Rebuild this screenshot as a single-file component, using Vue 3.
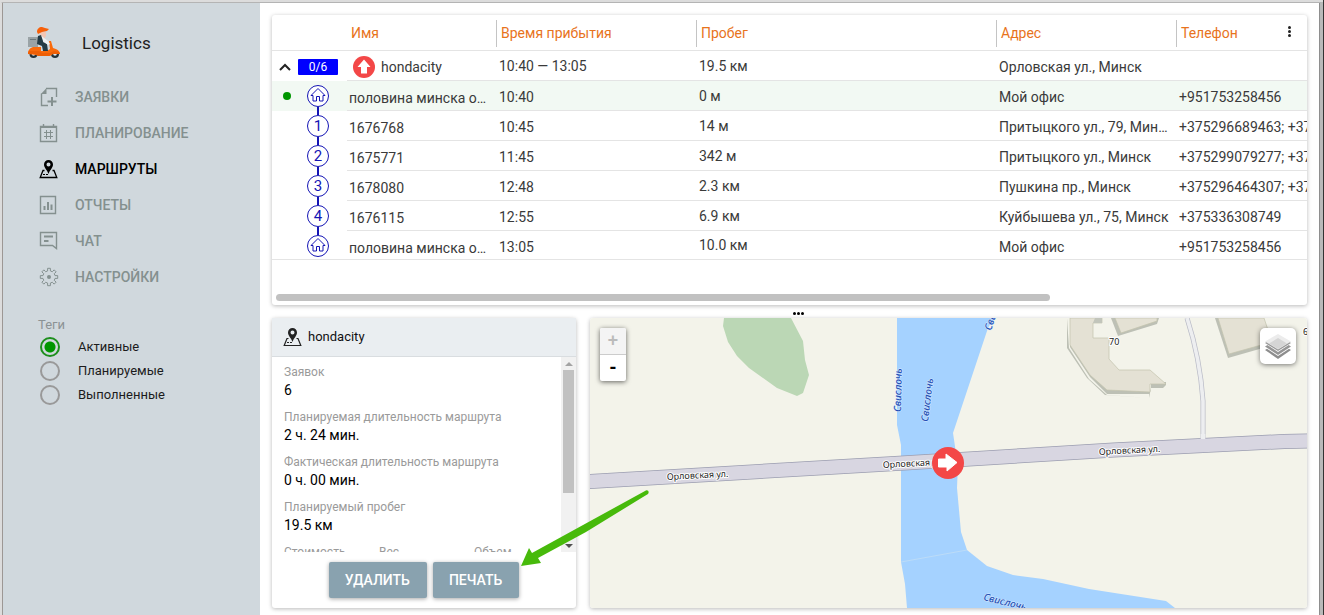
<script setup>
import { ref } from 'vue'

const nav = [
  { id: 'orders', label: 'ЗАЯВКИ' },
  { id: 'planning', label: 'ПЛАНИРОВАНИЕ' },
  { id: 'routes', label: 'МАРШРУТЫ' },
  { id: 'reports', label: 'ОТЧЕТЫ' },
  { id: 'chat', label: 'ЧАТ' },
  { id: 'settings', label: 'НАСТРОЙКИ' },
]
const active = ref('routes')
const tags = ['Активные', 'Планируемые', 'Выполненные']
const tag = ref('Активные')

// Outline of an eight-toothed gear centred on (10, 10)
const gear = 'M' + Array.from({ length: 8 }, (_, i) =>
  [[-9, 8.8], [9, 8.8], [13, 6.2], [32, 6.2]]
    .map(([a, r]) => {
      const t = ((i * 45 + a) * Math.PI) / 180
      return `${(10 + r * Math.sin(t)).toFixed(2)} ${(10 - r * Math.cos(t)).toFixed(2)}`
    })
    .join('L')
).join('L') + 'z'

const stops = [
  { mark: 'home', name: 'половина минска офис', time: '10:40', run: '0 м', address: 'Мой офис', phone: '+951753258456', current: true },
  { mark: '1', name: '1676768', time: '10:45', run: '14 м', address: 'Притыцкого ул., 79, Минск', phone: '+375296689463; +375296689464' },
  { mark: '2', name: '1675771', time: '11:45', run: '342 м', address: 'Притыцкого ул., Минск', phone: '+375299079277; +375299079278' },
  { mark: '3', name: '1678080', time: '12:48', run: '2.3 км', address: 'Пушкина пр., Минск', phone: '+375296464307; +375296464308' },
  { mark: '4', name: '1676115', time: '12:55', run: '6.9 км', address: 'Куйбышева ул., 75, Минск', phone: '+375336308749' },
  { mark: 'home', name: 'половина минска офис', time: '13:05', run: '10.0 км', address: 'Мой офис', phone: '+951753258456' },
]
const facts = [
  { label: 'Заявок', value: '6' },
  { label: 'Планируемая длительность маршрута', value: '2 ч. 24 мин.' },
  { label: 'Фактическая длительность маршрута', value: '0 ч. 00 мин.' },
  { label: 'Планируемый пробег', value: '19.5 км' },
]
</script>

<template>
  <div class="window">
    <aside class="sidebar">
      <div class="brand">
        <svg width="34" height="34" viewBox="27 26 34 34" aria-hidden="true">
          <rect x="28" y="37" width="10" height="10" fill="#9aa3a6" />
          <rect x="30" y="39" width="6" height="1" fill="#6b787d" />
          <circle cx="33.500" cy="54" r="4" fill="#263238" /><circle cx="33.500" cy="54" r="1.800" fill="#e4e9eb" />
          <circle cx="55" cy="54" r="4" fill="#263238" /><circle cx="55" cy="54" r="1.800" fill="#e4e9eb" />
          <path d="M28 54c0-4 2-6 5-7h8v4h6l3-2-1-8h2l2 7c4 1 7 3 7 6h-7l-3 2H38l-2-1z" fill="#f96a0b" />
          <path d="M28 54c0-1 0-2 1-3h10l3 2h8l4-2 5 1 1 2h-8l-3 2H38l-2-2z" fill="#ee5f06" />
          <path d="M40 32h6v4l-2 3h-3z" fill="#f3c6b4" />
          <path d="M38 36l3-1 2 3v4l4 2 1 7h-5l-1-5-5-2z" fill="#243b45" />
          <path d="M41 35l3 3 4 3 2 3-2 1-5-4z" fill="#eef1f2" />
          <path d="M37 32c0-3 2-5 5-5l3 1 4 1-2 2-5 1-4 2z" fill="#f7600a" />
        </svg>
        <h1>Logistics</h1>
      </div>
      <nav>
        <a v-for="n in nav" :key="n.id" href="#" :class="{ on: active === n.id }" @click.prevent="active = n.id">
          <svg width="20" height="20" viewBox="0 0 20 20" fill="none" stroke="currentColor" aria-hidden="true">
            <g v-if="n.id === 'orders'">
              <path d="M7 1.500h10.500V10M2.500 6.500v12H9" stroke-width="1.400" />
              <path d="M2 7 7.500 1v6z" fill="currentColor" stroke="none" />
              <path d="M13 10v9M8.500 14.500h9" stroke-width="2" />
            </g>
            <g v-else-if="n.id === 'planning'">
              <path d="M1.500 3.500h16v15h-16z" stroke-width="1.400" /><path d="M4.500 1v3M14.500 1v3" stroke-width="1.400" /><path d="M1 4h17" stroke-width="2" />
              <path d="M7.500 7v9M11.500 7v9M5 9.500h9M5 13.500h9" />
            </g>
            <g v-else-if="n.id === 'routes'">
              <path d="M5.500 11.500H4L1.200 18.500h16.600l-2.800-7h-1.500" stroke-width="1.300" />
              <path d="M4 15.500h5" stroke-dasharray="2 1" />
              <path d="M9.500 1A4.500 4.500 0 0 0 5 5.500C5 9 8 10.500 9.500 15 11 10.500 14 9 14 5.500A4.500 4.500 0 0 0 9.500 1zm0 2.500a2 2 0 1 1 0 4 2 2 0 0 1 0-4z" fill="currentColor" stroke="none" />
            </g>
            <g v-else-if="n.id === 'reports'">
              <path d="M1.500 1.500h15v17h-15z" stroke-width="1.400" /><path d="M5.500 11v4M9 7v8M12.500 9.500V15" stroke-width="2" />
            </g>
            <g v-else-if="n.id === 'chat'">
              <path d="M1.500 1.500h16v16l-4-3h-12z" stroke-width="1.400" /><path d="M5 5.500h9M5 10h4.500" stroke-width="2" />
            </g>
            <g v-else>
              <path :d="gear" stroke-linejoin="round" />
              <circle cx="10" cy="10" r="2" fill="currentColor" stroke="none" />
            </g>
          </svg>
          <span>{{ n.label }}</span>
        </a>
      </nav>
      <fieldset>
        <legend>Теги</legend>
        <label v-for="t in tags" :key="t"><input v-model="tag" type="radio" name="tag" :value="t" />{{ t }}</label>
      </fieldset>
    </aside>

    <main>
      <section class="card routes">
        <div class="viewport">
          <table>
            <colgroup><col class="c0" /><col class="c1" /><col class="c2" /><col class="c3" /><col class="c4" /><col class="c5" /></colgroup>
            <thead>
              <tr>
                <th></th><th>Имя</th><th><span>Время прибытия</span></th><th><span>Пробег</span></th><th><span>Адрес</span></th><th><span>Телефон</span></th>
              </tr>
            </thead>
            <tbody>
              <tr>
                <td>
                  <div class="lead">
                    <button class="caret" aria-label="Свернуть"><svg width="12" height="8" viewBox="0 0 12 8" fill="none" stroke="#222" stroke-width="2"><path d="M1 7l5-5 5 5" /></svg></button>
                    <span class="count">0/6</span>
                  </div>
                </td>
                <td>
                  <div class="vehicle">
                    <svg width="22" height="22" viewBox="0 0 22 22"><circle cx="11" cy="11" r="11" fill="#f34747" /><path d="M11 3.500 17.500 11H14v6.500H8V11H4.500z" fill="#fff" /></svg>hondacity
                  </div>
                </td>
                <td>10:40 — 13:05</td><td>19.5 км</td><td class="low">Орловская ул., Минск</td><td></td>
              </tr>
              <tr v-for="(s, i) in stops" :key="i" :class="{ current: s.current }">
                <td>
                  <div class="chain">
                    <span class="state"><i v-if="s.current"></i></span>
                    <svg width="24" height="28" viewBox="0 0 24 28" stroke="#1414b4" fill="none">
                      <path v-if="i" d="M12 -4V4" stroke-width="2" />
                      <path v-if="i < stops.length - 1" d="M12 26V31" stroke-width="2" />
                      <circle cx="12" cy="15" r="10.500" fill="#fff" />
                      <path v-if="s.mark === 'home'" d="M5 14.500 12 7.500l7 7h-2V20h-3.500v-4.500h-3V20H7v-5.500z" />
                      <text v-else x="12" y="20" text-anchor="middle">{{ s.mark }}</text>
                    </svg>
                  </div>
                </td>
                <td class="name">{{ s.name }}</td><td class="low">{{ s.time }}</td><td>{{ s.run }}</td><td class="low">{{ s.address }}</td><td class="low">{{ s.phone }}</td>
              </tr>
            </tbody>
          </table>
        </div>
        <div class="hbar"><div></div></div>
        <button class="more" aria-label="Меню"><i></i><i></i><i></i></button>
      </section>

      <div class="splitter"><i></i><i></i><i></i></div>

      <section class="lower">
        <article class="card info">
          <header>
            <svg width="20" height="20" viewBox="0 0 20 20" fill="none" stroke="#222" aria-hidden="true">
              <path d="M5.500 11.500H4L1.200 18.500h16.600l-2.800-7h-1.500" stroke-width="1.200" /><path d="M4 15.500h5" stroke-dasharray="2 1" />
              <path d="M9.500 1A4.500 4.500 0 0 0 5 5.500C5 9 8 10.500 9.500 15 11 10.500 14 9 14 5.500A4.500 4.500 0 0 0 9.500 1zm0 2.500a2 2 0 1 1 0 4 2 2 0 0 1 0-4z" fill="#222" stroke="none" />
            </svg>
            <h2>hondacity</h2>
          </header>
          <div class="body">
            <dl>
              <div v-for="f in facts" :key="f.label"><dt>{{ f.label }}</dt><dd>{{ f.value }}</dd></div>
              <div class="triple"><dt>Стоимость</dt><dt>Вес</dt><dt>Объем</dt></div>
            </dl>
            <div class="vbar"><b class="up"></b><div></div><b class="down"></b></div>
          </div>
          <footer><button>УДАЛИТЬ</button><button>ПЕЧАТЬ</button></footer>
        </article>

        <div class="card map">
          <svg class="tiles" viewBox="590 318 717 290" preserveAspectRatio="xMinYMin slice">
            <rect x="590" y="318" width="1400" height="700" fill="#f3f3ea" />
            <path d="M724 318h67l12 23 2 19 4 15-6 18-6 3-20-8-28-20-12-12-9-14-5-16z" fill="#bbd7b5" />
            <path d="M897 318h97l-6 10-35 105 3 20 2 10-1 25 4 44 6 18 20 16 26 9 30 4 46 10 77 12 9 7H907l-2-24-4-22V445l-4-20z" fill="#a5d2ff" />
            <path d="M901 562l66-12" stroke="#bcdcf8" />
            <path d="M1067 318h3v29l20 30 17 17h42v4l-44-3-18-17-20-30zM1067 318l2 30 20 31 18 16 42 3 2-10h12l3-3v-3h-15v8h-43l-17-16-19-27v-29z" fill="#bdc0b5" />
            <path d="M1070 318h32v5h-9v15h16v21l10 11h31l16 14h-16v8l-43-2-17-15-20-30z" fill="#e4e1d4" stroke="#c3c3ae" stroke-width=".7" />
            <path d="M1093 323l9 0v-5h-7z" fill="#c2c5bb" />
            <path d="M1111 318l7 18 39-12 2-6z" fill="#bdc0b5" /><path d="M1115 318l6 15 36-12v-3z" fill="#e4e1d4" stroke="#c3c3ae" stroke-width=".7" />
            <path d="M1215 318l13 40 35-10-3-30z" fill="#bdc0b5" /><path d="M1218 318l11 36 43-12-8-24z" fill="#e4e1d4" stroke="#c3c3ae" stroke-width=".7" />
            <path d="M1187 318q13 40 16 83v42" fill="none" stroke="#b8bac6" stroke-width="5" /><path d="M1187 318q13 40 16 83v42" fill="none" stroke="#edeef0" stroke-width="3.600" />
            <path d="M589 481.500 904 463l210-13 170-8.500 30-.5h700" fill="none" stroke="#9b9db0" stroke-width="15" />
            <path d="M589 481.500 904 463l210-13 170-8.500 30-.5h700" fill="none" stroke="#d8d6e1" stroke-width="13.500" />
            <path d="M1200.700 434v5h4.600v-5z" fill="#edeef0" />
            <g class="street">
              <text transform="translate(667 480) rotate(-3)">Орловская ул.</text>
              <text transform="translate(883 468) rotate(-3)">Орловская ул.</text>
              <text transform="translate(1099 455) rotate(-3)">Орловская ул.</text>
              <text x="1109" y="345">70</text><text x="1303" y="335">68</text>
            </g>
            <g class="river">
              <text transform="translate(901 412) rotate(-89)">Свислочь</text>
              <text transform="translate(928 422) rotate(-83)">Свислочь</text>
              <text transform="translate(991 331) rotate(-72)">Свислочь</text>
              <text transform="translate(983 600) rotate(14)">Свислочь</text>
            </g>
            <circle cx="948" cy="463" r="16" fill="#f34747" /><path d="M938.500 459h7.500v-5l11 8.500-10 8.500V467h-8.500z" fill="#fff" stroke="#fff" stroke-linejoin="round" />
          </svg>
          <div class="zoom"><button disabled aria-label="Приблизить">+</button><button aria-label="Отдалить">-</button></div>
          <button class="layers" aria-label="Слои">
            <svg width="28" height="28" viewBox="0 0 28 28">
              <path d="M1 18l13-8 13 8-13 9z" fill="#8d8d8d" /><path d="M1 15.500l13-8 13 8-13 8.500z" fill="#fff" />
              <path d="M1 14.500l13-8 13 8-13 8.500z" fill="#959595" /><path d="M1 11.500l13-8 13 8-13 8.500z" fill="#fff" />
              <path d="M1 11l13-8 13 8-13 8z" fill="#999" /><path d="M1 9.500 14 2l13 7.500-13 8z" fill="#ececec" /><path d="M5 11.500 14 6l9 5.500-9 5.500z" fill="#d5d5d5" />
            </svg>
          </button>
        </div>

        <svg class="pointer" width="132" height="80" viewBox="520 488 132 80" aria-hidden="true">
          <path d="M645 491c2-2 5 0 3 3l-5 3-57 35-48 26 3 5-20 3 8-18 3 5z" fill="#47ba0b" />
        </svg>
      </section>
    </main>
  </div>
</template>

<style>
body { background: #fff; }
</style>

<style scoped>
* { box-sizing: border-box; }
.window { height: 100vh; display: flex; font: 14px/20px Roboto, sans-serif; color: #3a3a3a; border-top: 3px solid #b4b4b4; border-left: 2px solid #dcdcdc; border-right: 4px solid #b9b9b9; box-shadow: inset -1px 0 #8e8e8e; position: relative; overflow: hidden; padding-right: 1px; }
button { font-family: inherit; border: 0; padding: 0; background: none; }
.window::before { content: ''; position: fixed; inset: 0 0 auto; height: 2px; background: #dcdcdc; }
.window::after { content: ''; position: fixed; inset: 0 0 0 auto; width: 1px; background: #333; }

.sidebar { width: 258px; flex: none; background: #d0d8dd; border-left: 1px solid #9c9794; padding-top: 23px; }
.brand { display: flex; align-items: center; gap: 21px; padding-left: 24px; height: 34px; }
h1 { margin: 0; font-size: 17px; font-weight: 400; color: #212121; }
nav { padding-top: 19px; }
nav a { display: flex; align-items: center; gap: 16px; height: 36px; padding-left: 36px; color: #84908f; font-size: 14px; font-weight: 500; text-decoration: none; }
nav a.on { color: #000; }
fieldset { border: 0; margin: 21px 0 0; padding: 0 0 0 35px; font-size: 13px; }
legend { padding: 0 0 1px; line-height: 18px; color: #8b9294; }
fieldset label { display: flex; align-items: center; gap: 18px; height: 24px; padding-left: 2px; color: #1c1c1c; }
input { appearance: none; width: 20px; height: 20px; margin: 0; border: 2px solid #999; border-radius: 50%; }
input:checked { border-color: #1d8f1d; background: radial-gradient(#009600 0 5px, transparent 6px); }

main { flex: 1; min-width: 0; display: flex; flex-direction: column; padding: 12px 12px 7px; }
.card { background: #fff; border-radius: 3px; box-shadow: 0 1px 4px rgba(0, 0, 0, .28); position: relative; }
.routes { flex: none; height: 290px; }
.viewport { overflow: hidden; height: 278px; border-radius: 3px 3px 0 0; }
table { width: 1363px; table-layout: fixed; border-collapse: separate; border-spacing: 0; }
.c0 { width: 75px; } .c1 { width: 149px; } .c2 { width: 200px; } .c3 { width: 300px; } .c4 { width: 180px; }
th { height: 36px; padding: 1px 0 0 4px; text-align: left; font-weight: 400; color: #e8731c; border-bottom: 1px solid #e4e4e4; }
th span { display: block; margin-left: -4px; padding-left: 4px; border-left: 1px solid #c4c4c4; line-height: 27px; }
td { height: 30px; padding: 1px 5px 0 3px; vertical-align: top; line-height: 28px; border-bottom: 1px solid #e4e4e4; white-space: nowrap; overflow: hidden; text-overflow: ellipsis; }
td:first-child { padding: 0; border-bottom-color: transparent; overflow: visible; }
td.name { padding: 5px 8px 0 2px; line-height: 24px; }
td.low { padding-top: 3px; line-height: 26px; }
tr:last-child td { height: 29px; border-bottom-color: #e4e4e4; line-height: 27px; }
tr:last-child td.name { padding-top: 6px; line-height: 22px; }
tr:last-child td.low { padding-top: 4px; line-height: 24px; }
.current { background: #f2f9f3; }
.lead { display: flex; align-items: center; gap: 7px; padding: 8px 0 0 7px; }
.caret { display: flex; }
.count { width: 40px; height: 16px; background: #00f; color: #fff; text-align: center; font-size: 12px; line-height: 16px; border-radius: 1px; }
.vehicle { display: flex; align-items: center; gap: 6px; padding: 1px 0 0 3px; height: 28px; }
.chain { display: flex; align-items: center; }
.chain svg { overflow: visible; display: block; margin-left: 4px; }
.chain text { font-size: 15px; fill: #1414b4; stroke: none; }
.state { width: 30px; display: flex; justify-content: center; padding-top: 2px; }
.state i { width: 8px; height: 8px; border-radius: 50%; background: #009600; }
.hbar { padding: 1px 4px; }
.hbar div { width: 75.4%; height: 7px; border-radius: 4px; background: #c1c1c1; }
.more { position: absolute; top: 10px; right: 15px; display: grid; gap: 1px; padding: 1px; }
.more i { width: 3px; height: 3px; border-radius: 50%; background: #222; }
.splitter { flex: none; height: 13px; display: flex; justify-content: center; align-items: flex-end; gap: 1px; padding: 0 0 3px 17px; }
.splitter i { width: 3px; height: 3px; border-radius: 50%; background: #000; }

.lower { flex: 1; min-height: 0; display: flex; gap: 14px; position: relative; }
.info { width: 304px; flex: none; display: flex; flex-direction: column; }
.info header { flex: none; height: 39px; display: flex; align-items: center; gap: 5px; padding-left: 11px; background: #eaeef1; border-bottom: 1px solid #d9dde0; }
h2 { margin: 0; font-size: 13px; font-weight: 400; color: #111; }
.body { flex: 1; min-height: 0; display: flex; overflow: hidden; }
dl { flex: 1; margin: 0; padding: 6px 0 0 12px; }
dl div { margin-bottom: 8px; }
dt { font-size: 12px; line-height: 18px; color: #9a9a9a; }
dd { margin: 0; color: #000; line-height: 19px; }
.triple { display: grid; grid-template-columns: 95px 95px 1fr; }
.vbar { width: 15px; background: #f1f1f1; display: flex; flex-direction: column; align-items: center; }
.vbar div { flex: none; width: 11px; height: 63%; background: #c1c1c1; }
.vbar b { border: 4px solid transparent; }
.vbar .up { border-bottom-color: #a3a3a3; margin: 1px 0 4px; }
.vbar .down { border-top-color: #505050; margin-top: auto; }
.info footer { flex: none; height: 56px; display: flex; justify-content: center; align-items: center; gap: 6px; }
.info footer button { height: 36px; padding: 0 17px 0 16px; background: #89a2af; color: #fff; font-size: 14px; font-weight: 500; border-radius: 2px; box-shadow: 0 1px 4px rgba(0, 0, 0, .35); }

.map { flex: 1; min-width: 0; overflow: hidden; }
.tiles { width: 100%; height: 100%; display: block; }
.street text, .river text { font-family: "Noto Sans", "Open Sans", sans-serif; paint-order: stroke; stroke-linejoin: round; }
.street text { font-size: 9px; fill: #222; stroke: #fff; stroke-width: 2px; }
.river text { font-size: 10px; font-weight: 500; font-style: italic; fill: #2450b4; stroke: #d9eaff; stroke-width: 1px; }
.zoom { position: absolute; left: 10px; top: 10px; width: 26px; box-shadow: 0 1px 5px rgba(0, 0, 0, .6); border-radius: 2px; overflow: hidden; background: #fff; }
.zoom button { display: block; width: 100%; height: 26px; font: 700 18px/26px "Liberation Mono", monospace; color: #000; }
.zoom button:first-child { height: 27px; background: #f4f4f4; color: #bbb; border-bottom: 1px solid #ccc; }
.layers { position: absolute; right: 11px; top: 10px; width: 36px; height: 36px; display: grid; place-items: center; background: #fff; border-radius: 5px; box-shadow: 0 1px 5px rgba(0, 0, 0, .5); }
.pointer { position: absolute; left: 248px; top: 170px; pointer-events: none; }
</style>
